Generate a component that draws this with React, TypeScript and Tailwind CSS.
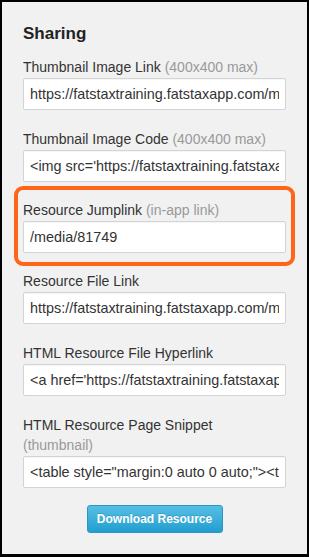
import React from 'react';

type Field = {
  label: string;
  hint?: string;
  value: string;
  hintBreak?: boolean;
};

const fields: Field[] = [
  {
    label: 'Thumbnail Image Link',
    hint: '(400x400 max)',
    value: 'https://fatstaxtraining.fatstaxapp.com/media/81749/thumbnail',
  },
  {
    label: 'Thumbnail Image Code',
    hint: '(400x400 max)',
    value: "<img src='https://fatstaxtraining.fatstaxapp.com/media/81749/thumbnail'>",
  },
  { label: 'Resource Jumplink', hint: '(in-app link)', value: '/media/81749' },
  {
    label: 'Resource File Link',
    value: 'https://fatstaxtraining.fatstaxapp.com/media/81749/file',
  },
  {
    label: 'HTML Resource File Hyperlink',
    value: "<a href='https://fatstaxtraining.fatstaxapp.com/media/81749/file'>",
  },
  {
    label: 'HTML Resource Page Snippet',
    hint: '(thumbnail)',
    hintBreak: true,
    value: '<table style="margin:0 auto 0 auto;"><tr><td>',
  },
];

function FieldBlock({ field }: { field: Field }) {
  return (
    <div>
      <label className="block text-[14px] leading-[20px] text-[#333] mb-px">
        {field.label}
        {field.hint && (
          <span className={field.hintBreak ? 'block text-[#999]' : 'text-[#999]'}>
            {field.hintBreak ? '' : ' '}
            {field.hint}
          </span>
        )}
      </label>
      <input
        readOnly
        value={field.value}
        className="block w-full h-[32px] px-[6px] bg-white border border-[#d4d4d4] rounded-[2px] text-[14.4px] text-[#333] outline-none shadow-[inset_0_1px_1px_rgba(0,0,0,0.04)]"
        style={{ fontFamily: '"Liberation Sans", Arial, sans-serif' }}
      />
    </div>
  );
}

export default function App() {
  return (
    <div
      className="w-[309px] h-[557px] bg-black pt-[2px] pl-[2px] pr-[2px] pb-[3px]"
      style={{ fontFamily: '"Liberation Sans", Arial, sans-serif' }}
    >
      <div className="h-full bg-[#f1f1f1] px-[21px] pt-[22px]">
        <h2 className="text-[17px] leading-[20px] font-bold text-[#222] mb-[13px]">Sharing</h2>

        <div className="mb-[19px]">
          <FieldBlock field={fields[0]} />
        </div>
        <div className="mb-[4px]">
          <FieldBlock field={fields[1]} />
        </div>

        {/* Highlighted jumplink */}
        <div className="-mx-[9px] border-[4px] border-[#ff6418] rounded-[9px] px-[5px] pt-[10px] pb-[9px] mb-[5px]">
          <FieldBlock field={fields[2]} />
        </div>

        <div className="mb-[19px]">
          <FieldBlock field={fields[3]} />
        </div>
        <div className="mb-[19px]">
          <FieldBlock field={fields[4]} />
        </div>
        <div className="mb-[17px]">
          <FieldBlock field={fields[5]} />
        </div>

        <div className="flex justify-center">
          <button className="w-[136px] h-[28px] rounded-[3px] border border-[#2b95c4] bg-gradient-to-b from-[#55bfe4] to-[#1d9fd0] text-white text-[12px] font-bold [text-shadow:0_-1px_0_rgba(0,0,0,0.15)]">
            Download Resource
          </button>
        </div>
      </div>
    </div>
  );
}
